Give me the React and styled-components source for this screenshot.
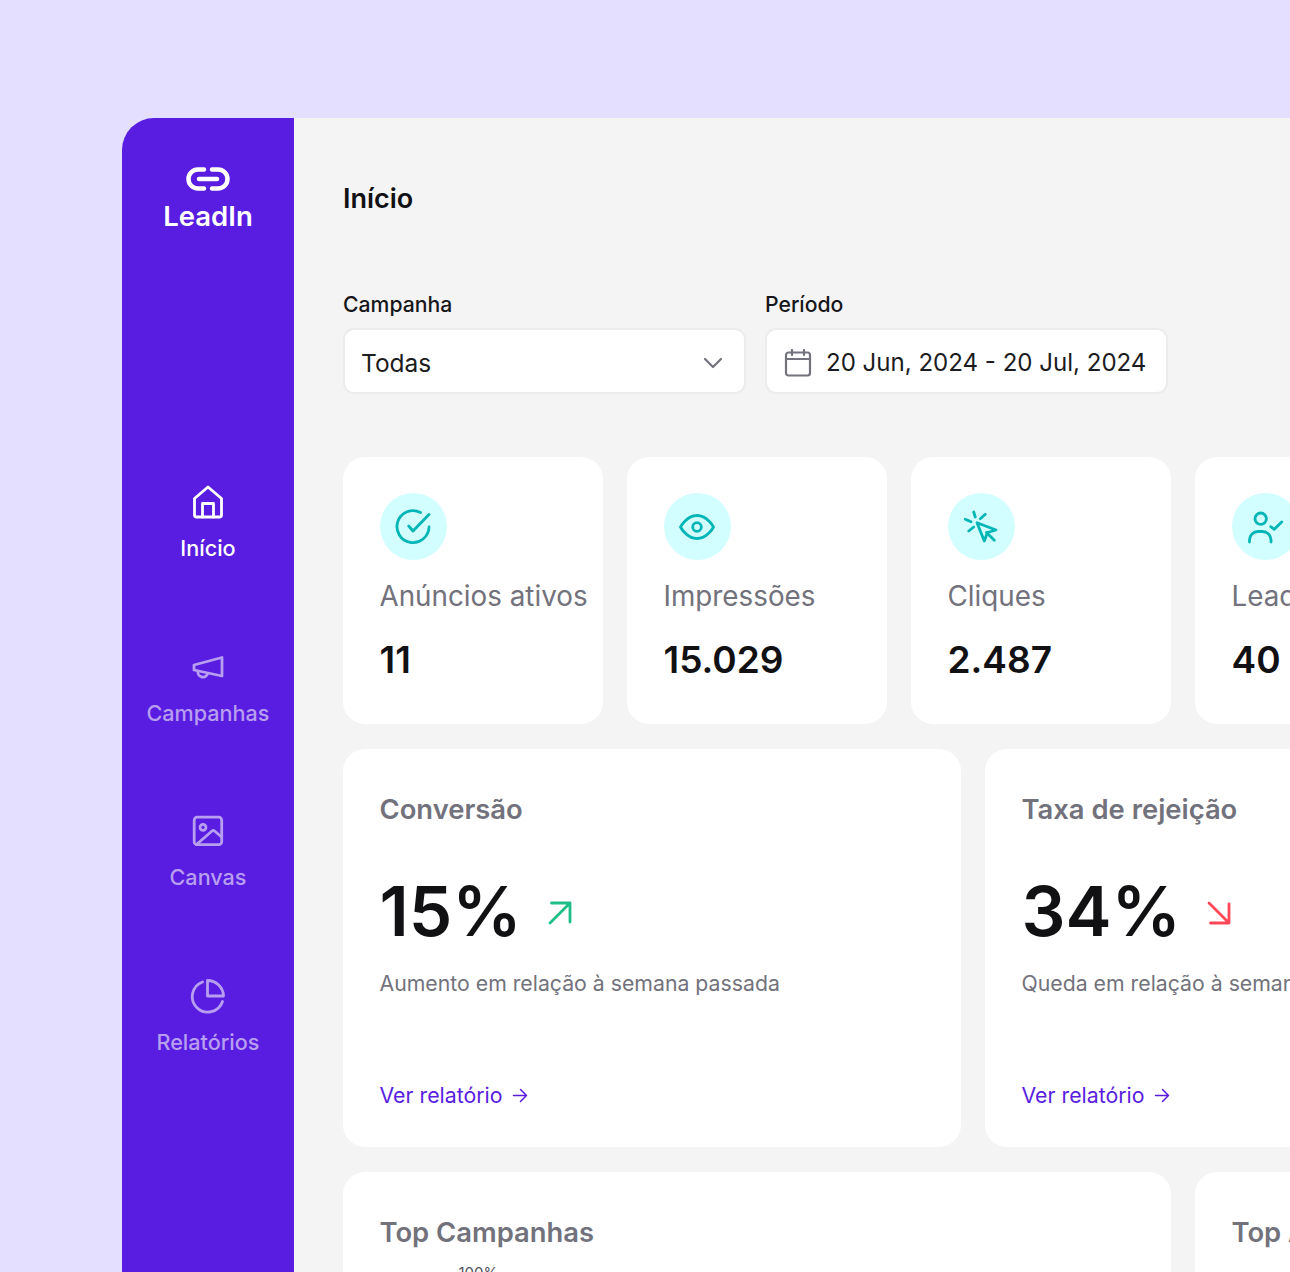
import React from "react";
import styled, { createGlobalStyle } from "styled-components";

const GlobalStyle = createGlobalStyle`
  html, body {
    margin: 0;
    padding: 0;
    height: 1272px;
    overflow: hidden;
    background: #e5dfff;
    font-family: Inter, "Liberation Sans", sans-serif;
  }
`;

const Page = styled.div`
  width: 1290px;
  height: 1272px;
  padding: 118px 0 0 122px;
  box-sizing: border-box;
  overflow: hidden;
`;

const Frame = styled.div`
  display: flex;
  width: 1168px;
  height: 1154px;
  border-top-left-radius: 32px;
  overflow: hidden;
  background: #f4f4f4;
`;

const Sidebar = styled.aside`
  flex: 0 0 172px;
  display: flex;
  flex-direction: column;
  align-items: center;
  padding-top: 49px;
  background: #581de0;
`;

const Brand = styled.div`
  display: flex;
  flex-direction: column;
  align-items: center;
  gap: 9px;
  color: #fff;
  font-size: 27.5px;
  font-weight: 600;
  line-height: 32px;
`;

const Nav = styled.nav`
  display: flex;
  flex-direction: column;
  align-items: center;
  margin-top: 253px;
`;

const NavItem = styled.a`
  display: flex;
  flex-direction: column;
  align-items: center;
  gap: 13px;
  height: 164.5px;
  color: ${(p) => (p.$active ? "#ffffff" : "#b89ef0")};
  font-size: 21.6px;
  font-weight: 500;
  line-height: 28px;
`;

const Main = styled.main`
  flex: 1;
  min-width: 0;
  padding: 63px 0 0 49px;
  overflow: hidden;
`;

const Title = styled.h1`
  margin: 0;
  color: #111114;
  font-size: 27px;
  font-weight: 600;
  line-height: 36px;
`;

const Filters = styled.div`
  display: flex;
  gap: 19px;
  margin-top: 74px;
`;

const Field = styled.div`
  display: flex;
  flex-direction: column;
  gap: 11px;
  width: 403px;
`;

const Label = styled.label`
  color: #17171a;
  font-size: 21.2px;
  font-weight: 500;
  line-height: 26px;
`;

const Control = styled.div`
  display: flex;
  align-items: center;
  justify-content: ${(p) => (p.$between ? "space-between" : "flex-start")};
  gap: 14px;
  height: 66px;
  padding: 3px ${(p) => (p.$between ? "21px" : "18px")} 0 ${(p) => (p.$between ? "16px" : "17px")};
  box-sizing: border-box;
  border: 2px solid #ececee;
  border-radius: 11px;
  background: #fff;
  color: #1c1c20;
  font-size: 24.5px;
  line-height: 32px;
  white-space: nowrap;
`;

const CalendarSlot = styled.span`
  display: flex;
  color: #73737d;
`;

const DateText = styled.span`
  font-size: 24.05px;
`;

const Row = styled.div`
  display: flex;
  gap: 24px;
  margin-top: ${(p) => p.$top}px;
`;

const Card = styled.section`
  flex: 0 0 ${(p) => p.$width}px;
  min-width: 0;
  height: ${(p) => p.$height}px;
  box-sizing: border-box;
  padding: 36px 36.5px;
  border-radius: 22px;
  background: #fff;
`;

const IconCircle = styled.div`
  display: flex;
  align-items: center;
  justify-content: center;
  width: 67px;
  height: 67px;
  border-radius: 50%;
  background: #d3feff;
  color: #00b5b5;
`;

const StatLabel = styled.div`
  margin-top: 19px;
  color: #72727c;
  font-size: 27.8px;
  line-height: 34px;
  white-space: nowrap;
`;

const StatValue = styled.div`
  margin-top: 24px;
  color: #111114;
  font-size: 37px;
  font-weight: 600;
  line-height: 46px;
`;

const MetricTitle = styled.h2`
  margin: 1px 0 0;
  color: #72727c;
  font-size: 27.4px;
  font-weight: 600;
  line-height: 46px;
  white-space: nowrap;
`;

const MetricValue = styled.div`
  display: flex;
  align-items: center;
  gap: 26px;
  margin-top: 33px;
  color: #111114;
  font-size: 69.2px;
  font-weight: 600;
  line-height: 92px;
`;

const Trend = styled.svg`
  margin-top: 3px;
  color: ${(p) => p.$color};
`;

const MetricNote = styled.p`
  margin: 11px 0 0;
  color: #72727c;
  font-size: 21.25px;
  line-height: 30px;
  white-space: nowrap;
`;

const ReportLink = styled.a`
  display: flex;
  align-items: center;
  gap: 9px;
  margin-top: 82px;
  color: #5a1de0;
  font-size: 21.3px;
  line-height: 30px;
`;

const Axis = styled.div`
  margin: 9px 0 0 79px;
  color: #55555e;
  font-size: 15px;
  line-height: 18px;
`;

const Icon = ({ size = 36, children, width = 2.8 }) => (
  <svg
    width={size}
    height={size}
    viewBox={`0 0 ${size} ${size}`}
    fill="none"
    stroke="currentColor"
    strokeWidth={width}
    strokeLinecap="round"
    strokeLinejoin="round"
  >
    {children}
  </svg>
);

const HomeIcon = () => (
  <Icon>
    <path d="M18 2 4.5 13.5V30a2 2 0 0 0 2 2h23a2 2 0 0 0 2-2V13.5Z" />
    <path d="M12.5 32V18.5h11V32" />
  </Icon>
);

const MegaphoneIcon = () => (
  <Icon>
    <path d="M32 7.5 4 15v5l28 6Z" />
    <path d="M8 21a5 5 0 0 0 9.5 3" />
  </Icon>
);

const ImageIcon = () => (
  <Icon>
    <rect x="4.2" y="3.2" width="27.5" height="27.5" rx="3" />
    <circle cx="13" cy="13.3" r="3" />
    <path d="M6.5 30.5 22 17a2 2 0 0 1 2.6 0l7 6" />
  </Icon>
);

const PieIcon = () => (
  <Icon>
    <path d="M17.5 1.5V17h16A16 16 0 0 0 17.5 1.5Z" />
    <path d="M12.5 3A15.5 15.5 0 1 0 32.5 22.5" />
  </Icon>
);

const CheckIcon = () => (
  <Icon size={40}>
    <path d="M27.5 5.5A16 16 0 1 0 36 20" />
    <path d="M15.7 19l4.3 5 16-16.5" />
  </Icon>
);

const EyeIcon = () => (
  <Icon size={40}>
    <path d="M3.5 20S9.5 8.5 20 8.5 36.5 20 36.5 20 30.5 31.5 20 31.5 3.5 20 3.5 20Z" />
    <circle cx="20" cy="20" r="4.3" />
  </Icon>
);

const ClickIcon = () => (
  <Icon size={40}>
    <path d="M16 15.7 23.3 34l3.2-8.5L35 23Z" />
    <path d="M25.5 25.5 33.3 33.3" />
    <path d="M12.7 5l1.6 5M4.3 12.3l5.7 2.4M24.3 7.3 19.3 11.7M7.7 24l5-4" />
  </Icon>
);

const UserCheckIcon = () => (
  <Icon size={40}>
    <circle cx="15.7" cy="11.7" r="5.7" />
    <path d="M4.5 35v-2A8.5 8.5 0 0 1 13 24.5h4.5A8.5 8.5 0 0 1 26 33v2" />
    <path d="M25.7 19.7l3.6 2.6 7.4-7.3" />
  </Icon>
);

const CalendarIcon = () => (
  <Icon size={28} width={2.2}>
    <rect x="2" y="3.5" width="24" height="23" rx="2.5" />
    <path d="M2 10h24M8 1v5M20 1v5" />
  </Icon>
);

const ChevronIcon = () => (
  <svg width="20" height="12" viewBox="0 0 20 12" fill="none" stroke="#73737d" strokeWidth="2.2" strokeLinecap="round" strokeLinejoin="round">
    <path d="M2 2l8 8 8-8" />
  </svg>
);

const LinkLogo = () => (
  <svg width="44" height="24" viewBox="0 0 44 24" fill="none" stroke="currentColor" strokeWidth="4.5" strokeLinecap="round" strokeLinejoin="round">
    <path d="M18 2.5h-6a9.5 9.5 0 0 0 0 19h6" />
    <path d="M26 2.5h6a9.5 9.5 0 0 1 0 19h-6" />
    <path d="M13 12h18" />
  </svg>
);

const ArrowRight = () => (
  <svg width="16" height="15" viewBox="0 0 16 15" fill="none" stroke="currentColor" strokeWidth="1.5" strokeLinecap="round" strokeLinejoin="round">
    <path d="M1.5 7.5h13M8.5 1.5l6 6-6 6" />
  </svg>
);

const UpRight = () => (
  <Trend $color="#1dbf87" width="24" height="24" viewBox="0 0 24 24" fill="none" stroke="currentColor" strokeWidth="2.8" strokeLinecap="round" strokeLinejoin="round">
    <path d="M2 22 22 2M3.5 2H22v19" />
  </Trend>
);

const DownRight = () => (
  <Trend $color="#ff4757" width="24" height="24" viewBox="0 0 24 24" fill="none" stroke="currentColor" strokeWidth="2.8" strokeLinecap="round" strokeLinejoin="round">
    <path d="M2 2 22 22M22 3v19H3.5" />
  </Trend>
);

const navItems = [
  { label: "Início", icon: <HomeIcon />, active: true },
  { label: "Campanhas", icon: <MegaphoneIcon /> },
  { label: "Canvas", icon: <ImageIcon /> },
  { label: "Relatórios", icon: <PieIcon /> },
];

const stats = [
  { label: "Anúncios ativos", value: "11", icon: <CheckIcon /> },
  { label: "Impressões", value: "15.029", icon: <EyeIcon /> },
  { label: "Cliques", value: "2.487", icon: <ClickIcon /> },
  { label: "Leads", value: "40", icon: <UserCheckIcon /> },
];

const metrics = [
  { title: "Conversão", value: "15%", note: "Aumento em relação à semana passada", trend: <UpRight /> },
  { title: "Taxa de rejeição", value: "34%", note: "Queda em relação à semana passada", trend: <DownRight /> },
];

const App = () => {
  return (
    <>
      <GlobalStyle />
      <Page>
        <Frame>
          <Sidebar>
            <Brand>
              <LinkLogo />
              LeadIn
            </Brand>
            <Nav>
              {navItems.map((item) => (
                <NavItem key={item.label} $active={item.active}>
                  {item.icon}
                  {item.label}
                </NavItem>
              ))}
            </Nav>
          </Sidebar>
          <Main>
            <Title>Início</Title>
            <Filters>
              <Field>
                <Label>Campanha</Label>
                <Control $between>
                  Todas
                  <ChevronIcon />
                </Control>
              </Field>
              <Field>
                <Label>Período</Label>
                <Control>
                  <CalendarSlot>
                    <CalendarIcon />
                  </CalendarSlot>
                  <DateText>20 Jun, 2024 - 20 Jul, 2024</DateText>
                </Control>
              </Field>
            </Filters>
            <Row $top={63}>
              {stats.map((stat) => (
                <Card key={stat.label} $width={260} $height={267}>
                  <IconCircle>{stat.icon}</IconCircle>
                  <StatLabel>{stat.label}</StatLabel>
                  <StatValue>{stat.value}</StatValue>
                </Card>
              ))}
            </Row>
            <Row $top={25}>
              {metrics.map((metric) => (
                <Card key={metric.title} $width={618} $height={398}>
                  <MetricTitle>{metric.title}</MetricTitle>
                  <MetricValue>
                    {metric.value}
                    {metric.trend}
                  </MetricValue>
                  <MetricNote>{metric.note}</MetricNote>
                  <ReportLink>
                    Ver relatório
                    <ArrowRight />
                  </ReportLink>
                </Card>
              ))}
            </Row>
            <Row $top={25}>
              <Card $width={828} $height={400}>
                <MetricTitle>Top Campanhas</MetricTitle>
                <Axis>100%</Axis>
              </Card>
              <Card $width={828} $height={400}>
                <MetricTitle>Top Anúncios</MetricTitle>
              </Card>
            </Row>
          </Main>
        </Frame>
      </Page>
    </>
  );
};

export default App;
